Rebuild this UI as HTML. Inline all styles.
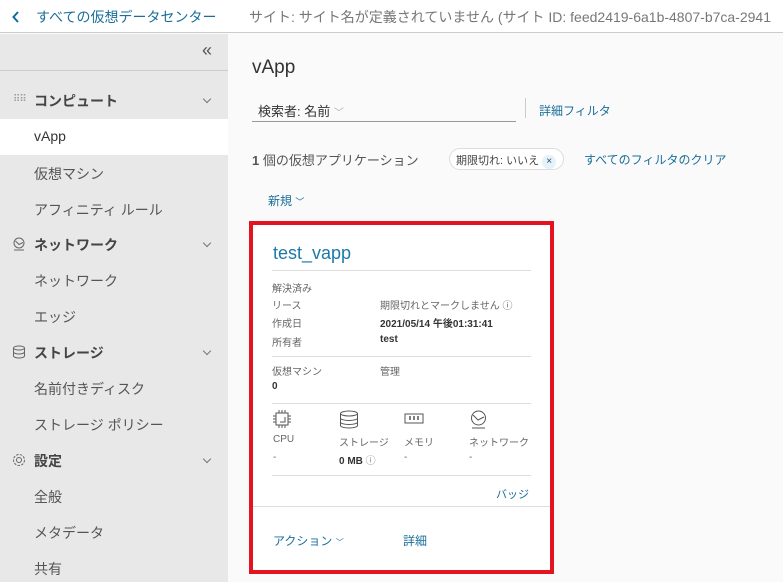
<!DOCTYPE html>
<html><head><meta charset="utf-8"><style>
*{box-sizing:border-box;margin:0;padding:0}
body{width:783px;height:582px;overflow:hidden;font-family:"Liberation Sans","Noto Sans CJK JP",sans-serif;background:#fafafa;position:relative;color:#333}
.hdr{position:absolute;left:0;top:0;width:783px;height:33px;background:#fff;border-bottom:1px solid #ccc;font-size:14px;white-space:nowrap}
.side{position:absolute;left:0;top:34px;width:228px;height:548px;background:#e8e8e8}
.a{position:absolute;white-space:nowrap}
.si{position:absolute;left:34px;font-size:14px;color:#555}
.sh{position:absolute;left:34px;font-size:14px;font-weight:bold;color:#444}
.chev{position:absolute;left:204px;width:6px;height:6px;border-right:1.2px solid #777;border-bottom:1.2px solid #777;transform:rotate(45deg)}
.card{position:absolute;left:249px;top:221px;width:305px;height:353px;border:4px solid #e3141f;background:#fff}
.c{position:absolute;white-space:nowrap;font-size:10px;color:#666}
.b{color:#333;font-weight:bold}
.hr{position:absolute;left:19px;width:259px;height:1px;background:#ddd}
</style></head><body>
<div class="hdr">
<svg class="a" style="left:12px;top:11px" width="8" height="12"><path d="M6 1L1.5 6L6 11" stroke="#0b6c9e" stroke-width="2" fill="none"/></svg>
<span class="a" style="left:36px;top:7px;color:#1a6e99">すべての仮想データセンター</span>
<span class="a" style="left:249px;top:7px;color:#777">サイト: サイト名が定義されていません (サイト ID: feed2419-6a1b-4807-b7ca-2941</span>
</div>
<div class="side">
<div style="position:absolute;left:0;top:36px;width:228px;height:1px;background:#ccc"></div>
<span class="a" style="left:202px;top:6px;font-size:18px;color:#555">«</span>
<span class="a" style="left:13px;top:60px;font-size:10px;color:#999;letter-spacing:-1px">⠿⠿</span>
<span class="sh" style="left:34px;top:57px">コンピュート</span><div class="chev" style="top:62px"></div>
<div style="position:absolute;left:0;top:85px;width:228px;height:36px;background:#fff"></div>
<span class="si" style="top:94px;color:#333">vApp</span>
<span class="si" style="top:130px">仮想マシン</span>
<span class="si" style="top:166px">アフィニティ ルール</span>
<svg class="a" style="left:12px;top:203px" width="14" height="14"><circle cx="7" cy="6" r="5" fill="none" stroke="#666"/><path d="M3.5 4l3.5 3.5 4-2M2 13h10" fill="none" stroke="#666"/></svg>
<span class="sh" style="top:201px">ネットワーク</span><div class="chev" style="top:206px"></div>
<span class="si" style="top:237px">ネットワーク</span>
<span class="si" style="top:273px">エッジ</span>
<svg class="a" style="left:12px;top:311px" width="14" height="14"><ellipse cx="7" cy="3" rx="5.5" ry="2" fill="none" stroke="#666"/><path d="M1.5 3v8c0 1 2.5 2 5.5 2s5.5-1 5.5-2V3M1.5 7c0 1 2.5 2 5.5 2s5.5-1 5.5-2" fill="none" stroke="#666"/></svg>
<span class="sh" style="top:309px">ストレージ</span><div class="chev" style="top:314px"></div>
<span class="si" style="top:345px">名前付きディスク</span>
<span class="si" style="top:381px">ストレージ ポリシー</span>
<svg class="a" style="left:12px;top:419px" width="14" height="14"><circle cx="7" cy="7" r="2.5" fill="none" stroke="#666"/><circle cx="7" cy="7" r="5.5" fill="none" stroke="#666" stroke-dasharray="2.5 1.3"/></svg>
<span class="sh" style="top:417px">設定</span><div class="chev" style="top:422px"></div>
<span class="si" style="top:453px">全般</span>
<span class="si" style="top:489px">メタデータ</span>
<span class="si" style="top:525px">共有</span>
</div>
<span class="a" style="left:252px;top:57px;font-size:19px;color:#333">vApp</span>
<span class="a" style="left:258px;top:101px;font-size:13px;color:#333">検索者: 名前 <span style="color:#aaa;font-size:10px">﹀</span></span>
<div style="position:absolute;left:252px;top:121px;width:264px;height:1px;background:#999"></div>
<div style="position:absolute;left:525px;top:98px;width:1px;height:20px;background:#ccc"></div>
<span class="a" style="left:539px;top:102px;font-size:12px;color:#1a6e99">詳細フィルタ</span>
<span class="a" style="left:252px;top:150px;font-size:13px;color:#555"><b>1</b> 個の仮想アプリケーション</span>
<div class="a" style="left:449px;top:148px;width:115px;height:22px;border:1px solid #ddd;border-radius:11px;background:#fff;font-size:11px;color:#444;padding:3px 0 0 6px">期限切れ: いいえ <span style="display:inline-block;width:14px;height:14px;border-radius:7px;background:#e3f3fb;text-align:center;font-size:10px;line-height:14px">×</span></div>
<span class="a" style="left:584px;top:151px;font-size:12px;color:#1a6e99">すべてのフィルタのクリア</span>
<span class="a" style="left:268px;top:192px;font-size:12px;color:#1a6e99">新規 <span style="font-size:9px">﹀</span></span>
<div class="card">
<span class="c" style="left:20px;top:18px;font-size:18px;color:#1a7aa8">test_vapp</span>
<div class="hr" style="top:45px"></div>
<span class="c" style="left:19px;top:55px">解決済み</span>
<span class="c" style="left:19px;top:72px">リース</span><span class="c" style="left:127px;top:72px">期限切れとマークしません ⓘ</span>
<span class="c" style="left:19px;top:90px">作成日</span><span class="c b" style="left:127px;top:90px">2021/05/14 午後01:31:41</span>
<span class="c" style="left:19px;top:109px">所有者</span><span class="c b" style="left:127px;top:109px">test</span>
<div class="hr" style="top:131px"></div>
<span class="c" style="left:19px;top:138px">仮想マシン</span><span class="c" style="left:127px;top:138px">管理</span>
<span class="c b" style="left:19px;top:156px">0</span>
<div class="hr" style="top:178px"></div>
<svg class="a" style="left:20px;top:185px" width="18" height="18"><rect x="3" y="3" width="12" height="12" fill="none" stroke="#555"/><path d="M6 0v3M9 0v3M12 0v3M6 15v3M9 15v3M12 15v3M0 6h3M0 9h3M0 12h3M15 6h3M15 9h3M15 12h3M7 12h5V7" fill="none" stroke="#555"/></svg>
<svg class="a" style="left:86px;top:185px" width="20" height="19"><ellipse cx="10" cy="3.5" rx="8.5" ry="2.5" fill="none" stroke="#555"/><path d="M1.5 3.5v12c0 1.5 4 2.5 8.5 2.5s8.5-1 8.5-2.5v-12M1.5 8c0 1.5 4 2.5 8.5 2.5S18.5 9.5 18.5 8M1.5 12c0 1.5 4 2.5 8.5 2.5s8.5-1 8.5-2.5" fill="none" stroke="#555"/></svg>
<svg class="a" style="left:151px;top:188px" width="20" height="12"><rect x="1" y="1" width="18" height="9" fill="none" stroke="#555"/><path d="M6 3v4M10 3v4M14 3v4" stroke="#555" stroke-width="1.5"/></svg>
<svg class="a" style="left:216px;top:185px" width="19" height="19"><circle cx="9.5" cy="8" r="7" fill="none" stroke="#555"/><path d="M4 5l5 5 6-3M3 18h13" fill="none" stroke="#555"/></svg>
<span class="c" style="left:20px;top:209px">CPU</span><span class="c" style="left:86px;top:209px">ストレージ</span><span class="c" style="left:151px;top:209px">メモリ</span><span class="c" style="left:216px;top:209px">ネットワーク</span>
<span class="c" style="left:20px;top:227px">-</span><span class="c b" style="left:86px;top:227px">0 MB <span style="color:#888;font-weight:normal">ⓘ</span></span><span class="c" style="left:151px;top:227px">-</span><span class="c" style="left:216px;top:227px">-</span>
<div class="hr" style="top:250px"></div>
<span class="c" style="left:243px;top:261px;font-size:11px;color:#1a6e99">バッジ</span>
<div style="position:absolute;left:0;top:281px;width:297px;height:1px;background:#ddd"></div>
<span class="c" style="left:20px;top:307px;font-size:12px;color:#1a6e99">アクション <span style="font-size:8px">﹀</span></span>
<span class="c" style="left:150px;top:307px;font-size:12px;color:#1a6e99">詳細</span>
</div>
</body></html>
